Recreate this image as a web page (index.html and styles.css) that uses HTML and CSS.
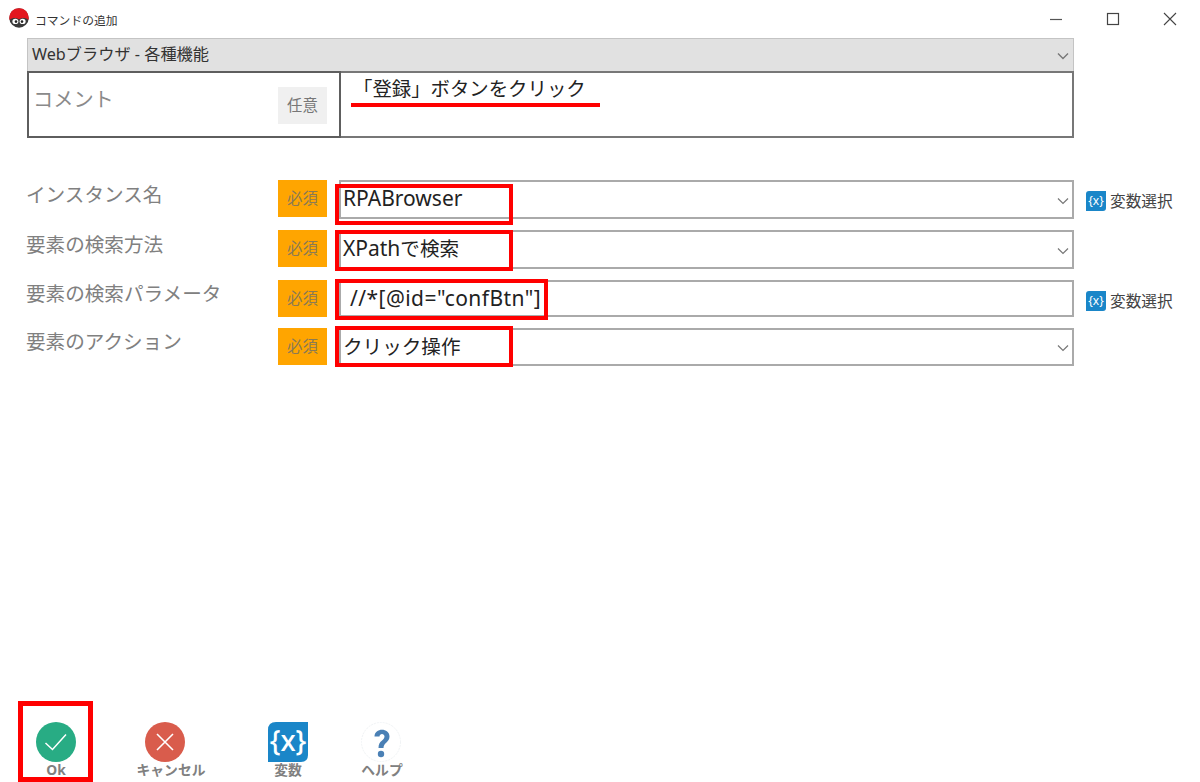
FILE: index.html
```html
<!DOCTYPE html>
<html lang="ja">
<head>
<meta charset="utf-8">
<title>コマンドの追加</title>
<link rel="stylesheet" href="styles.css">
</head>
<body>
<div class="window">
  <header class="titlebar">
    <svg class="logo" viewBox="0 0 20 20" width="20" height="20">
      <circle cx="10" cy="10" r="9.7" fill="#3a3a3a"/>
      <path d="M0.4 12 C-0.4 4 4.5 0.2 10 0.2 C15.5 0.2 20.4 4 19.6 12 C16.5 9.4 13 9.6 10 11.2 C7 9.6 3.5 9.4 0.4 12Z" fill="#e3171f"/>
      <ellipse cx="6.4" cy="13.4" rx="3" ry="2.7" fill="#fff"/>
      <ellipse cx="13.6" cy="13.4" rx="3" ry="2.7" fill="#fff"/>
      <circle cx="7" cy="13.6" r="1.3" fill="#222"/>
      <circle cx="13" cy="13.6" r="1.3" fill="#222"/>
    </svg>
    <span class="title">コマンドの追加</span>
    <div class="winctl">
      <svg width="14" height="14" viewBox="0 0 14 14"><path d="M1 7.5H13" stroke="#555" stroke-width="1.2"/></svg>
      <svg width="14" height="14" viewBox="0 0 14 14"><rect x="1.5" y="1.5" width="11" height="11" fill="none" stroke="#444" stroke-width="1.2"/></svg>
      <svg width="14" height="14" viewBox="0 0 14 14"><path d="M1 1L13 13M13 1L1 13" stroke="#444" stroke-width="1.1"/></svg>
    </div>
  </header>

  <main class="form">
    <div class="group">
      <span>Webブラウザ - 各種機能</span>
      <svg class="chev" width="12" height="8" viewBox="0 0 12 8"><path d="M1 1.5L6 6.5L11 1.5" fill="none" stroke="#777" stroke-width="1.4"/></svg>
    </div>
    <div class="comment">
      <div class="comment-label">
        <span class="comment-name">コメント</span>
        <span class="badge opt">任意</span>
      </div>
      <div class="comment-value">
        <span>「登録」ボタンをクリック</span>
        <i class="underline"></i>
      </div>
    </div>

    <div class="row r1">
      <span class="label">インスタンス名</span>
      <span class="badge req">必須</span>
      <div class="field">
        <span class="wide">RPABrowser</span>
        <svg class="chev" width="12" height="8" viewBox="0 0 12 8"><path d="M1 1.5L6 6.5L11 1.5" fill="none" stroke="#777" stroke-width="1.2"/></svg>
        <i class="mark m1"></i>
      </div>
      <div class="varsel">
        <svg class="varicon" viewBox="0 0 20 20" width="20" height="20"><path d="M3 0H20V17Q20 20 17 20H0V3Q0 0 3 0Z" fill="#1a86c8"/><text x="10" y="14" class="vartext">{x}</text></svg>
        <span>変数選択</span>
      </div>
    </div>

    <div class="row r2">
      <span class="label">要素の検索方法</span>
      <span class="badge req">必須</span>
      <div class="field">
        <span><span class="wide">XPath</span>で検索</span>
        <svg class="chev" width="12" height="8" viewBox="0 0 12 8"><path d="M1 1.5L6 6.5L11 1.5" fill="none" stroke="#777" stroke-width="1.2"/></svg>
        <i class="mark m2"></i>
      </div>
    </div>

    <div class="row r3">
      <span class="label">要素の検索パラメータ</span>
      <span class="badge req">必須</span>
      <div class="field param">
        <span class="wide spaced">//*[@id="confBtn"]</span>
        <i class="mark m3"></i>
      </div>
      <div class="varsel">
        <svg class="varicon" viewBox="0 0 20 20" width="20" height="20"><path d="M3 0H20V17Q20 20 17 20H0V3Q0 0 3 0Z" fill="#1a86c8"/><text x="10" y="14" class="vartext">{x}</text></svg>
        <span>変数選択</span>
      </div>
    </div>

    <div class="row r4">
      <span class="label">要素のアクション</span>
      <span class="badge req">必須</span>
      <div class="field">
        <span>クリック操作</span>
        <svg class="chev" width="12" height="8" viewBox="0 0 12 8"><path d="M1 1.5L6 6.5L11 1.5" fill="none" stroke="#777" stroke-width="1.2"/></svg>
        <i class="mark m4"></i>
      </div>
    </div>
  </main>

  <footer class="toolbar">
    <div class="tool ok">
      <svg viewBox="0 0 40 40" width="40" height="40"><circle cx="20" cy="20" r="20" fill="#28ac84"/><path d="M9.5 21L16.5 27.5L30 12.5" fill="none" stroke="#fff" stroke-width="1.5"/></svg>
      <span>Ok</span>
      <i class="mark mok"></i>
    </div>
    <div class="tool cancel">
      <svg viewBox="0 0 40 40" width="40" height="40"><circle cx="20" cy="20" r="20" fill="#d95c4c"/><path d="M12 12L28 28M28 12L12 28" stroke="#fff" stroke-width="1.6"/></svg>
      <span>キャンセル</span>
    </div>
    <div class="tool vars">
      <svg viewBox="0 0 40 40" width="40" height="40"><path d="M8 0H40V33Q40 40 33 40H0V8Q0 0 8 0Z" fill="#1a86c8"/><text x="20" y="29" class="vartext big">{x}</text></svg>
      <span>変数</span>
    </div>
    <div class="tool help">
      <svg viewBox="0 0 40 40" width="40" height="40"><circle cx="20" cy="20" r="19.5" fill="#fff" stroke="#f0f3f5" stroke-dasharray="2 1"/><path d="M13.5 14.5C13.5 5.5 28.5 5.5 28.5 14.5C28.5 20.5 22.5 20.5 22.5 26H17.5C17.5 18.5 23.5 18.5 23.5 14.5C23.5 11 18.5 11 18.5 14.5Z" fill="#4a80b5"/><circle cx="20" cy="32" r="3.2" fill="#4a80b5"/></svg>
      <span>ヘルプ</span>
    </div>
  </footer>
</div>
</body>
</html>
```

FILE: styles.css
```css
* { box-sizing: border-box; }
html, body { margin: 0; padding: 0; background: #fff; }
body {
  font-family: "Noto Sans", "Noto Sans CJK JP", sans-serif;
  color: #333;
  overflow: hidden;
}
.window {
  width: 1200px;
  height: 782px;
  display: flex;
  flex-direction: column;
}
i { display: block; font-style: normal; }

/* title bar */
.titlebar {
  height: 38px;
  flex: none;
  display: flex;
  align-items: center;
  padding-left: 9px;
}
.logo { flex: none; position: relative; top: -1px; }
.title { margin-left: 6px; font-size: 11.8px; color: #333; }
.winctl {
  margin-left: auto;
  display: flex;
  gap: 43px;
  padding-right: 23px;
}

/* form */
.form {
  flex: 1;
  display: flex;
  flex-direction: column;
  padding-left: 27px;
}
.group {
  width: 1047px;
  height: 33px;
  background: #e1e1e1;
  border: 1px solid #c4c4c4;
  border-bottom: 0;
  display: flex;
  align-items: center;
  justify-content: space-between;
  padding: 0 4px 5px 4px;
  font-size: 16.2px;
  color: #333;
}
.group .chev { position: relative; top: 3px; }
.comment {
  width: 1047px;
  height: 67px;
  display: flex;
}
.comment-label {
  width: 314px;
  border: 2px solid #5e5e5e;
  display: flex;
  justify-content: space-between;
  padding: 14px 12px 0 4px;
}
.comment-name { font-size: 20.2px; line-height: 24px; color: #8a8a8a; }
.comment-value {
  flex: 1;
  position: relative;
  border: 2px solid #777;
  border-left: 0;
  padding: 2px 0 0 12px;
  font-size: 19.4px;
  line-height: 28px;
  color: #222;
}
.underline {
  position: absolute;
  left: 10px;
  top: 30px;
  width: 249px;
  height: 4px;
  background: #f00;
}

.badge {
  width: 49px;
  height: 37px;
  flex: none;
  display: flex;
  align-items: center;
  justify-content: center;
  padding-bottom: 3px;
  font-size: 15.4px;
}
.badge.opt { background: #f0f0f0; color: #777; }
.badge.req { background: #ffa500; color: #8a7a55; }

.row {
  display: flex;
  align-items: flex-start;
  height: 39px;
  margin-left: -1px;
}
.r1 { margin-top: 42px; }
.r2 { margin-top: 11px; }
.r3 { margin-top: 11px; height: 37px; }
.r4 { margin-top: 11px; height: 38px; }
.label {
  width: 252px;
  flex: none;
  font-size: 19.6px;
  line-height: 28px;
  color: #808080;
  margin-top: 1px;
}
.r3 .label, .r4 .label { margin-top: 0; }
.field {
  position: relative;
  width: 735px;
  height: 100%;
  margin-left: 12px;
  border: 2px solid #aaa;
  display: flex;
  align-items: center;
  justify-content: space-between;
  padding: 0 3px 0 2px;
  font-size: 19.6px;
  color: #222;
}
.field > span { position: relative; top: -2px; }
.field > .chev { position: relative; top: 1px; }
.wide { font-size: 21px; }
.spaced { letter-spacing: 0.45px; }
.field.param { padding-left: 9px; }
.field.param > span { top: -1px; }
.mark {
  position: absolute;
  border: 4px solid #f00;
  pointer-events: none;
}
.m1 { left: -6px; top: 2px; width: 178px; height: 41px; }
.m2 { left: -6px; top: -2px; width: 178px; height: 41px; }
.m3 { left: -6px; top: -3px; width: 213px; height: 41px; }
.m4 { left: -6px; top: -4px; width: 178px; height: 41px; }

.varsel {
  display: flex;
  align-items: center;
  gap: 4px;
  margin-left: 12px;
  margin-top: 9px;
  font-size: 15.7px;
  color: #444;
  white-space: nowrap;
}
.varicon { flex: none; }
.vartext {
  fill: #fff;
  font-family: "Noto Sans", sans-serif;
  font-size: 12px;
  text-anchor: middle;
}
.vartext.big { font-size: 28px; font-weight: 500; }

/* bottom toolbar */
.toolbar {
  height: 60px;
  flex: none;
  display: flex;
  align-items: flex-start;
}
.tool {
  position: relative;
  display: flex;
  flex-direction: column;
  align-items: center;
  font-size: 13.8px;
  line-height: 16px;
  color: #808080;
  font-weight: 700;
  white-space: nowrap;
  width: 80px;
}
.tool svg { flex: none; }
.tool.ok { margin-left: 16px; }
.tool.cancel { margin-left: 29px; }
.tool.cancel span { margin-left: 12px; }
.tool.vars { margin-left: 43px; }
.tool.help { margin-left: 13px; }
.tool.help span { margin-left: 2px; }
.mok { left: 2px; top: -21px; width: 75px; height: 81px; border-width: 5px; }
```
